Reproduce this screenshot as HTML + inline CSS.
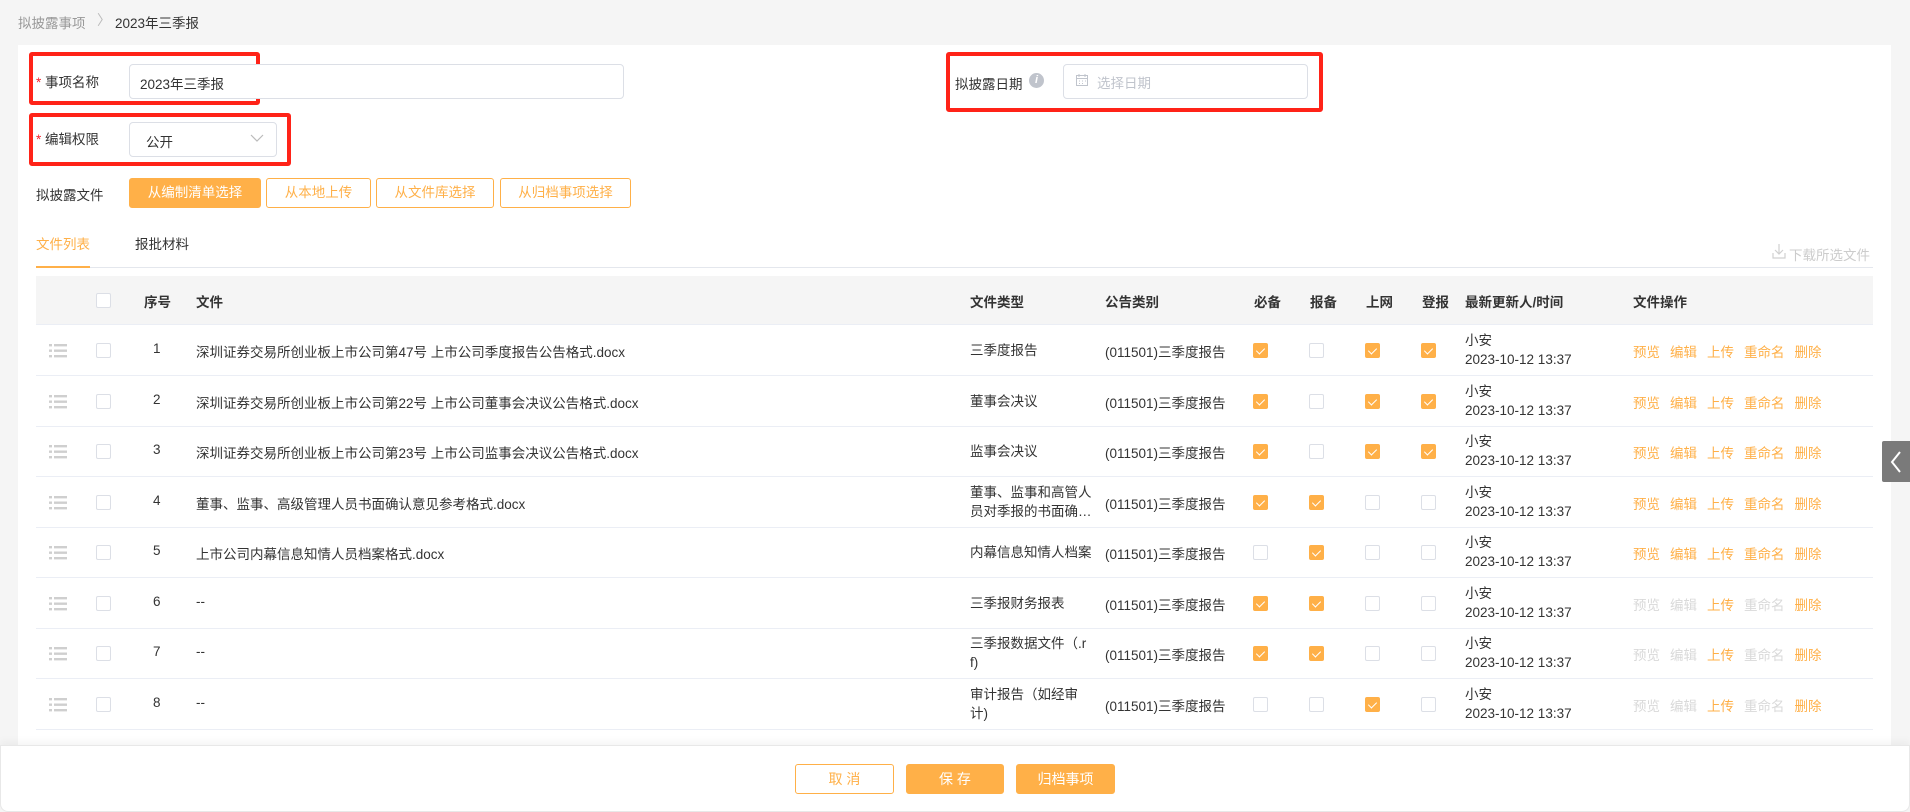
<!DOCTYPE html>
<html><head><meta charset="utf-8"><style>
*{box-sizing:border-box;margin:0;padding:0}
body{width:1910px;height:812px;background:#f5f5f5;font-family:"Liberation Sans","Noto Sans CJK SC",sans-serif;font-size:13.5px;color:#333;position:relative;overflow:hidden}
.a{position:absolute}
.panel{left:18px;top:45px;width:1873px;height:720px;background:#fff}
.red{border:4px solid #ff2318;border-radius:3px}
.inp{border:1px solid #dcdfe6;border-radius:4px;background:#fff}
.star{color:#f5222d}
.btn{border:1px solid #ffb048;border-radius:3px;color:#ffb048;text-align:center;line-height:28px;background:#fff}
.btnf{background:#ffb048;color:#fff;border-color:#ffb048}
.row{left:36px;width:1837px;height:50px;border-bottom:1px solid #ebeef5}
.cb{width:15px;height:15px;border:1px solid #dcdfe6;border-radius:2px;background:#fff}
.ck{background:#ffb048;border-color:#ffb048}
.ck:after{content:"";position:absolute;left:4px;top:2px;width:4px;height:7px;border:solid #fff;border-width:0 1px 1px 0;transform:rotate(45deg)}
.c{position:absolute}
.h{font-weight:bold;color:#333}
.op span{margin-right:10px;color:#ffb048}
.op span.d{color:#d9d9d9}
</style></head><body>
<div class="a" style="left:18px;top:12px;color:#999">拟披露事项</div>
<div class="a" style="left:97px;top:10px;color:#bbb;font-size:14px">〉</div>
<div class="a" style="left:115px;top:12px;color:#333">2023年三季报</div>
<div class="a panel"></div>

<div class="a red" style="left:29px;top:52px;width:231px;height:53px"></div>
<div class="a" style="left:36px;top:71px"><span class="star">*</span> 事项名称</div>
<div class="a inp" style="left:129px;top:64px;width:495px;height:35px;padding:8px 10px">2023年三季报</div>

<div class="a red" style="left:29px;top:113px;width:262px;height:53px"></div>
<div class="a" style="left:36px;top:128px"><span class="star">*</span> 编辑权限</div>
<div class="a inp" style="left:129px;top:122px;width:148px;height:35px;padding:8px 16px">公开</div>
<svg class="a" style="left:250px;top:133px" width="14" height="10"><path d="M1 2 L7 8 L13 2" fill="none" stroke="#bbb" stroke-width="1.2"/></svg>

<div class="a red" style="left:946px;top:52px;width:377px;height:60px"></div>
<div class="a" style="left:955px;top:73px">拟披露日期</div>
<div class="a" style="left:1029px;top:73px;width:15px;height:15px;border-radius:50%;background:#c0c4cc;color:#fff;font-size:11px;font-style:italic;font-weight:bold;text-align:center;line-height:15px">i</div>
<div class="a inp" style="left:1063px;top:64px;width:245px;height:35px"></div>
<svg class="a" style="left:1075px;top:73px" width="14" height="14"><rect x="1.5" y="2.5" width="11" height="10" fill="none" stroke="#c0c4cc"/><path d="M1.5 5.5h11M4 1v3M10 1v3M4 8h1M7 8h1M10 8h1M4 10.5h1M7 10.5h1" stroke="#c0c4cc"/></svg>
<div class="a" style="left:1097px;top:72px;color:#c0c4cc">选择日期</div>

<div class="a" style="left:36px;top:184px">拟披露文件</div>
<div class="a btn btnf" style="left:129px;top:178px;width:132px;height:30px">从编制清单选择</div>
<div class="a btn" style="left:266px;top:178px;width:105px;height:30px">从本地上传</div>
<div class="a btn" style="left:376px;top:178px;width:118px;height:30px">从文件库选择</div>
<div class="a btn" style="left:500px;top:178px;width:131px;height:30px">从归档事项选择</div>

<div class="a" style="left:36px;top:233px;color:#ffb048">文件列表</div>
<div class="a" style="left:135px;top:233px">报批材料</div>
<div class="a" style="left:36px;top:267px;width:1837px;height:1px;background:#e4e7ed"></div>
<div class="a" style="left:36px;top:266px;width:54px;height:2px;background:#ffb048"></div>
<svg class="a" style="left:1772px;top:243px" width="14" height="16"><path d="M7 1v10M3 7l4 4 4-4M1 10v5h12v-5" fill="none" stroke="#d0d0d0" stroke-width="1.2"/></svg>
<div class="a" style="left:1789px;top:244px;color:#ccc">下载所选文件</div>

<div class="a" style="left:36px;top:276px;width:1837px;height:49px;background:#f5f5f5;border-bottom:1px solid #ebeef5">
<div class="c cb" style="left:60px;top:17px"></div>
<div class="c h" style="left:108px;top:15px">序号</div>
<div class="c h" style="left:160px;top:15px">文件</div>
<div class="c h" style="left:934px;top:15px">文件类型</div>
<div class="c h" style="left:1069px;top:15px">公告类别</div>
<div class="c h" style="left:1218px;top:15px">必备</div>
<div class="c h" style="left:1274px;top:15px">报备</div>
<div class="c h" style="left:1330px;top:15px">上网</div>
<div class="c h" style="left:1386px;top:15px">登报</div>
<div class="c h" style="left:1429px;top:15px">最新更新人/时间</div>
<div class="c h" style="left:1597px;top:15px">文件操作</div>
</div>

<div id="rows"></div>
<script>
var d=[
["深圳证券交易所创业板上市公司第47号 上市公司季度报告公告格式.docx","三季度报告",1,0,1,1,0],
["深圳证券交易所创业板上市公司第22号 上市公司董事会决议公告格式.docx","董事会决议",1,0,1,1,0],
["深圳证券交易所创业板上市公司第23号 上市公司监事会决议公告格式.docx","监事会决议",1,0,1,1,0],
["董事、监事、高级管理人员书面确认意见参考格式.docx","董事、监事和高管人<br>员对季报的书面确…",1,1,0,0,0],
["上市公司内幕信息知情人员档案格式.docx","内幕信息知情人档案",0,1,0,0,0],
["--","三季报财务报表",1,1,0,0,1],
["--","三季报数据文件（.r<br>f)",1,1,0,0,1],
["--","审计报告（如经审<br>计)",0,0,1,0,1]];
var h="";
for(var i=0;i<8;i++){var r=d[i],t=326+i*50.5;
var two=r[1].indexOf("<br>")>=0;
h+='<div class="a row" style="top:'+t+'px">'+
'<svg class="c" style="left:13px;top:18px" width="20" height="14"><g fill="#cfcfcf"><rect x="0" y="0" width="3" height="2.4"/><rect x="5" y="0" width="13" height="2.4"/><rect x="0" y="5.5" width="3" height="2.4"/><rect x="5" y="5.5" width="13" height="2.4"/><rect x="0" y="11" width="3" height="2.4"/><rect x="5" y="11" width="13" height="2.4"/></g></svg>'+
'<div class="c cb" style="left:60px;top:17px"></div>'+
'<div class="c" style="left:117px;top:15px">'+(i+1)+'</div>'+
'<div class="c" style="left:160px;top:15px">'+r[0]+'</div>'+
'<div class="c" style="left:934px;top:'+(two?5:15)+'px;line-height:19px">'+r[1]+'</div>'+
'<div class="c" style="left:1069px;top:15px">(011501)三季度报告</div>';
var xs=[1217,1273,1329,1385];
for(var k=0;k<4;k++)h+='<div class="c cb'+(r[2+k]?' ck':'')+'" style="left:'+xs[k]+'px;top:17px"></div>';
h+='<div class="c" style="left:1429px;top:5px;line-height:19px">小安<br>2023-10-12 13:37</div>'+
'<div class="c op" style="left:1597px;top:15px">'+(r[6]?'<span class="d">预览</span><span class="d">编辑</span><span>上传</span><span class="d">重命名</span><span>删除</span>':'<span>预览</span><span>编辑</span><span>上传</span><span>重命名</span><span>删除</span>')+'</div></div>';}
document.getElementById("rows").innerHTML=h;
</script>

<div class="a" style="left:1882px;top:441px;width:28px;height:41px;background:#7a7a7a;border-radius:2px 0 0 2px"></div>
<svg class="a" style="left:1889px;top:450px" width="14" height="24"><path d="M11 2 L3 12 L11 22" fill="none" stroke="#fff" stroke-width="2"/></svg>

<div class="a" style="left:0;top:745px;width:1910px;height:67px;background:#fff;border:1px solid #e8e8e8;border-radius:0 0 8px 8px;box-shadow:0 -4px 8px rgba(0,0,0,0.04)"></div>
<div class="a btn" style="left:795px;top:764px;width:99px;height:30px;font-size:14px;line-height:28px">取 消</div>
<div class="a btn btnf" style="left:906px;top:764px;width:98px;height:30px;font-size:14px;line-height:28px">保 存</div>
<div class="a btn btnf" style="left:1016px;top:764px;width:99px;height:30px;font-size:14px;line-height:28px">归档事项</div>
</body></html>
